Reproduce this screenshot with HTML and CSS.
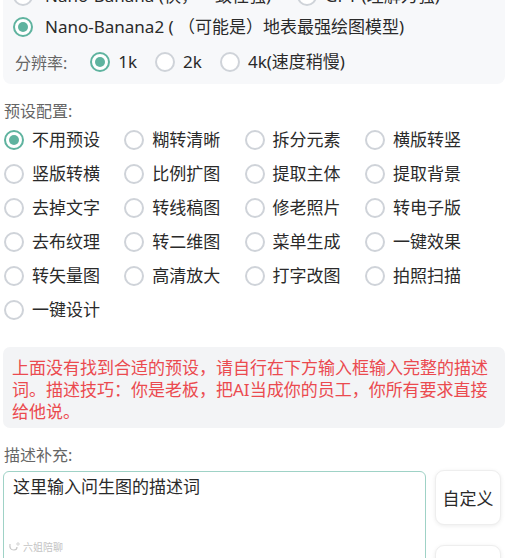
FILE: index.html
```html
<!DOCTYPE html>
<html lang="zh-CN">
<head>
<meta charset="utf-8">
<title>绘图设置</title>
<link rel="stylesheet" href="styles.css">
</head>
<body>
<div class="page">
  <div class="model-card">
    <div class="row r1">
      <label class="opt"><span class="radio"></span><span>Nano-Banana (快，一致性强)</span></label>
      <label class="opt gpt"><span class="radio"></span><span>GPT (理解力强)</span></label>
    </div>
    <div class="row r2">
      <label class="opt wide"><span class="radio on"></span><span>Nano-Banana2 ( （可能是）地表最强绘图模型)</span></label>
    </div>
    <div class="row r3">
      <span class="res-label">分辨率:</span>
      <label class="opt"><span class="radio on"></span><span>1k</span></label>
      <label class="opt"><span class="radio"></span><span>2k</span></label>
      <label class="opt"><span class="radio"></span><span>4k(速度稍慢)</span></label>
    </div>
  </div>

  <div class="section-label preset-label">预设配置:</div>
  <div class="preset-grid">
    <label class="opt"><span class="radio on"></span><span>不用预设</span></label>
    <label class="opt"><span class="radio"></span><span>糊转清晰</span></label>
    <label class="opt"><span class="radio"></span><span>拆分元素</span></label>
    <label class="opt"><span class="radio"></span><span>横版转竖</span></label>
    <label class="opt"><span class="radio"></span><span>竖版转横</span></label>
    <label class="opt"><span class="radio"></span><span>比例扩图</span></label>
    <label class="opt"><span class="radio"></span><span>提取主体</span></label>
    <label class="opt"><span class="radio"></span><span>提取背景</span></label>
    <label class="opt"><span class="radio"></span><span>去掉文字</span></label>
    <label class="opt"><span class="radio"></span><span>转线稿图</span></label>
    <label class="opt"><span class="radio"></span><span>修老照片</span></label>
    <label class="opt"><span class="radio"></span><span>转电子版</span></label>
    <label class="opt"><span class="radio"></span><span>去布纹理</span></label>
    <label class="opt"><span class="radio"></span><span>转二维图</span></label>
    <label class="opt"><span class="radio"></span><span>菜单生成</span></label>
    <label class="opt"><span class="radio"></span><span>一键效果</span></label>
    <label class="opt"><span class="radio"></span><span>转矢量图</span></label>
    <label class="opt"><span class="radio"></span><span>高清放大</span></label>
    <label class="opt"><span class="radio"></span><span>打字改图</span></label>
    <label class="opt"><span class="radio"></span><span>拍照扫描</span></label>
    <label class="opt"><span class="radio"></span><span>一键设计</span></label>
  </div>

  <div class="notice">上面没有找到合适的预设，请自行在下方输入框输入完整的描述词。描述技巧：你是老板，把AI当成你的员工，你所有要求直接给他说。</div>

  <div class="section-label desc-label">描述补充:</div>
  <div class="input-row">
    <div class="text-wrap">
      <div class="textbox">这里输入问生图的描述词</div>
      <span class="watermark"><svg class="wm-icon" width="12" height="10" viewBox="0 0 12 10"><path d="M2 2 Q1 8 6 8 Q9 8 9 5" fill="none" stroke="#c8c8c8" stroke-width="1.2"/><circle cx="10" cy="2" r="1.2" fill="none" stroke="#c8c8c8" stroke-width="0.8"/></svg>六姐陪聊</span>
    </div>
    <div class="buttons">
      <button class="btn">自定义</button>
      <button class="btn"></button>
    </div>
  </div>
</div>
</body>
</html>
```

FILE: styles.css
```css
* { box-sizing: border-box; }
html, body { margin: 0; padding: 0; background: #ffffff; overflow: hidden; }
body {
  font-family: "Noto Sans", "Noto Sans CJK SC", sans-serif;
  font-size: 17px;
  color: #2a2a2a;
}
.page {
  width: 512px;
  margin-top: -28px;
  padding-left: 3px;
}
.model-card {
  width: 502px;
  background: #f7f8fa;
  border-radius: 8px;
  padding: 8px 10px 2px;
}
.row { display: flex; align-items: center; }
.r1 { height: 32px; }
.r2 { height: 30px; }
.r3 { height: 40px; padding-left: 2px; }
.opt { display: flex; align-items: center; gap: 8px; white-space: nowrap; line-height: 24px; }
.r1 .opt, .r2 .opt { gap: 12px; }
.r1 .gpt { margin-left: 26px; gap: 8px; }
.r3 .opt { margin-right: 18px; }
.res-label { color: #666; font-size: 16px; margin-right: 23px; }
.radio {
  flex: none;
  width: 20px;
  height: 20px;
  border-radius: 50%;
  border: 2px solid #cfd3d9;
  background: #fff;
  position: relative;
}
.radio.on { border-color: #5fb39f; }
.radio.on::after {
  content: "";
  position: absolute;
  left: 3px; top: 3px;
  width: 10px; height: 10px;
  border-radius: 50%;
  background: #5fb39f;
}
.section-label { color: #666; font-size: 16px; line-height: 24px; padding-left: 1px; }
.preset-label { margin-top: 15px; }
.preset-grid {
  display: grid;
  grid-template-columns: repeat(4, 120.3px);
  grid-auto-rows: 34px;
  align-items: center;
  padding-left: 1px;
}
.notice {
  width: 502px;
  margin-top: 20px;
  background: #f3f4f6;
  border-radius: 7px;
  padding: 10px 9px 5px;
  color: #eb4a4f;
  line-height: 22px;
}
.desc-label { margin-top: 15px; }
.input-row { display: flex; gap: 9px; margin-top: 3px; align-items: flex-start; }
.text-wrap { position: relative; }
.textbox {
  width: 423px;
  height: 110px;
  margin-top: 1px;
  border: 1.5px solid #9fd2c6;
  border-radius: 6px;
  padding: 3px 9px;
  line-height: 24px;
  color: #2a2a2a;
  background: #fff;
}
.watermark {
  position: absolute;
  left: 5px;
  top: 69px;
  display: flex;
  align-items: center;
  gap: 3px;
  font-size: 10px;
  color: #c4c4c4;
}
.buttons { display: flex; flex-direction: column; gap: 20px; }
.btn {
  width: 66px;
  height: 55px;
  border: 1px solid #eeeeee;
  border-radius: 9px;
  background: #fff;
  box-shadow: 0 1px 4px rgba(0,0,0,0.08);
  font-family: inherit;
  font-size: 17px;
  color: #2a2a2a;
  padding: 0;
}
```
